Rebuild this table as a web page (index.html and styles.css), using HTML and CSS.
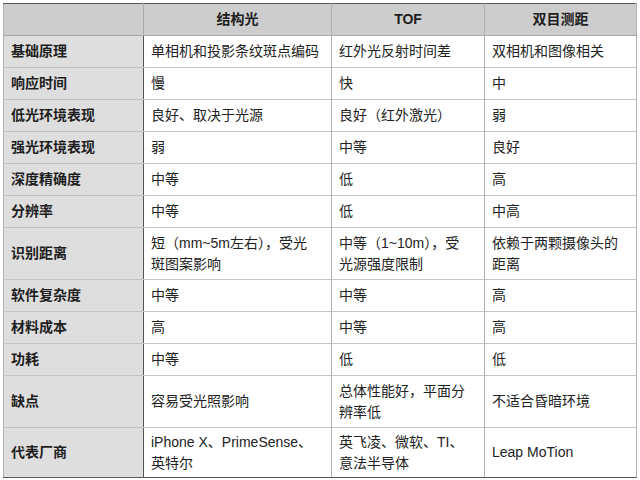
FILE: index.html
```html
<!DOCTYPE html>
<html lang="zh">
<head>
<meta charset="utf-8">
<link rel="stylesheet" href="styles.css">
</head>
<body>
<table class="cmp">
  <colgroup>
    <col class="c1"><col class="c2"><col class="c3"><col class="c4">
  </colgroup>
  <thead>
    <tr><th class="lead"></th><th>结构光</th><th>TOF</th><th>双目测距</th></tr>
  </thead>
  <tbody>
    <tr><th>基础原理</th><td>单相机和投影条纹斑点编码</td><td>红外光反射时间差</td><td>双相机和图像相关</td></tr>
    <tr><th>响应时间</th><td>慢</td><td>快</td><td>中</td></tr>
    <tr><th>低光环境表现</th><td>良好、取决于光源</td><td>良好（红外激光）</td><td>弱</td></tr>
    <tr><th>强光环境表现</th><td>弱</td><td>中等</td><td>良好</td></tr>
    <tr><th>深度精确度</th><td>中等</td><td>低</td><td>高</td></tr>
    <tr><th>分辨率</th><td>中等</td><td>低</td><td>中高</td></tr>
    <tr class="tall"><th>识别距离</th><td>短（mm~5m左右），受光<br>斑图案影响</td><td>中等（1~10m），受<br>光源强度限制</td><td>依赖于两颗摄像头的<br>距离</td></tr>
    <tr><th>软件复杂度</th><td>中等</td><td>中等</td><td>高</td></tr>
    <tr><th>材料成本</th><td>高</td><td>中等</td><td>高</td></tr>
    <tr><th>功耗</th><td>中等</td><td>低</td><td>低</td></tr>
    <tr class="tall"><th>缺点</th><td>容易受光照影响</td><td>总体性能好，平面分<br>辨率低</td><td>不适合昏暗环境</td></tr>
    <tr class="tall"><th>代表厂商</th><td>iPhone X、PrimeSense、<br>英特尔</td><td>英飞凌、微软、TI、<br>意法半导体</td><td>Leap MoTion</td></tr>
  </tbody>
</table>
</body>
</html>
```

FILE: styles.css
```css
html, body {
  margin: 0;
  padding: 0;
  background: #ffffff;
}
body {
  padding: 3px 0 0 3px;
  font-family: "Liberation Sans", "Noto Sans CJK SC", sans-serif;
  font-size: 14px;
  color: #222222;
}
.cmp {
  border-collapse: collapse;
  table-layout: fixed;
  width: 633px;
  border: 1px solid #5a5a5a;
}
.c1 { width: 140px; }
.c2 { width: 188px; }
.c3 { width: 153px; }
.c4 { width: 152px; }
.cmp th, .cmp td {
  height: 32px;
  box-sizing: border-box;
  padding: 0 7px;
  line-height: 21px;
  vertical-align: middle;
  text-align: left;
  border-top: 1px solid #c4c4c4;
  border-bottom: 1px solid #c4c4c4;
  border-left: 1px solid #b0b0b0;
  border-right: 1px solid #b0b0b0;
}
.cmp thead th {
  background: #cdcdcd;
  text-align: center;
  font-weight: bold;
  color: #1e1e1e;
  border-top: 1px solid #5a5a5a;
  border-bottom: 1px solid #a8a8a8;
}
.cmp tbody th {
  background: #dedede;
  font-weight: bold;
  color: #1e1e1e;
  border-right: 1px solid #555555;
}
.cmp thead th.lead {
  border-right: 1px solid #a8a8a8;
}
.cmp tr.tall th, .cmp tr.tall td {
  height: 52px;
}
.cmp tbody tr:last-child th, .cmp tbody tr:last-child td {
  border-bottom: 1px solid #5a5a5a;
  height: 50px;
}
```
